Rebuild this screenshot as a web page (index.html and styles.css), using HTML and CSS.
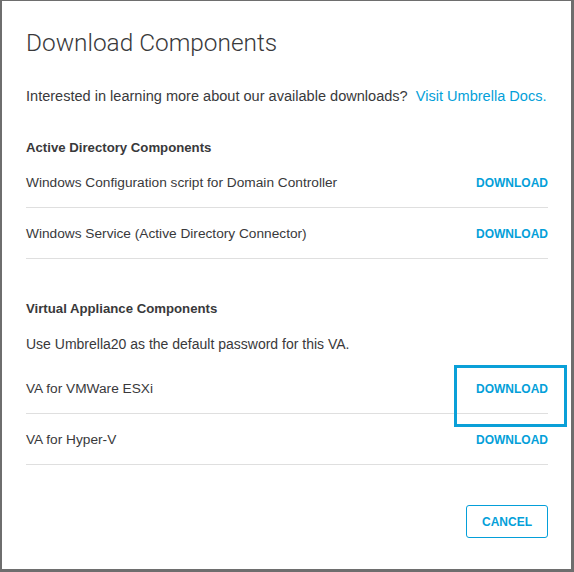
FILE: index.html
```html
<!DOCTYPE html>
<html>
<head>
<meta charset="utf-8">
<link rel="stylesheet" href="styles.css">
</head>
<body>
<div class="modal">
  <h1 class="title">Download Components</h1>
  <p class="intro">Interested in learning more about our available downloads?&nbsp; <a class="link" href="#">Visit Umbrella Docs.</a></p>

  <section class="section first">
    <h2 class="heading">Active Directory Components</h2>
    <div class="row"><span class="label">Windows Configuration script for Domain Controller</span><a class="dl" href="#">DOWNLOAD</a></div>
    <div class="row"><span class="label">Windows Service (Active Directory Connector)</span><a class="dl" href="#">DOWNLOAD</a></div>
  </section>

  <section class="section second">
    <h2 class="heading">Virtual Appliance Components</h2>
    <p class="note">Use Umbrella20 as the default password for this VA.</p>
    <div class="row"><span class="label">VA for VMWare ESXi</span><a class="dl" href="#">DOWNLOAD</a></div>
    <div class="row"><span class="label">VA for Hyper-V</span><a class="dl" href="#">DOWNLOAD</a></div>
  </section>

  <div class="footer"><button class="cancel">CANCEL</button></div>

  <div class="highlight"></div>
</div>
</body>
</html>
```

FILE: styles.css
```css
* { box-sizing: border-box; }
html, body { margin: 0; padding: 0; background: #fff; }
body { font-family: "Liberation Sans", Arial, sans-serif; color: #39393b; }

.modal {
  position: relative;
  width: 574px;
  height: 572px;
  border-style: solid;
  border-color: #6e6e6e;
  border-width: 1px 3px 3px 2px;
  padding: 0 23px 0 24px;
  background: #fff;
}

.title {
  margin: 0;
  padding-top: 27px;
  font-family: Roboto, "Liberation Sans", sans-serif;
  font-weight: 300;
  font-size: 24.4px;
  line-height: 30px;
  color: #39393b;
}

.intro {
  margin: 28px 0 0;
  font-size: 14.55px;
  line-height: 20px;
  white-space: nowrap;
}

.link { color: #049fd9; text-decoration: none; }

.section.first { margin-top: 33px; }
.section.second { margin-top: 41px; }

.heading {
  margin: 0;
  font-size: 13.2px;
  line-height: 17px;
  padding-bottom: 1px;
  font-weight: bold;
  color: #39393b;
}

.note {
  margin: 16px 0 9px;
  font-size: 14px;
  line-height: 20px;
}

.row {
  display: flex;
  justify-content: space-between;
  align-items: center;
  padding: 16px 0 14px;
  border-bottom: 1px solid #dfdfdf;
  font-size: 13.7px;
  line-height: 20px;
}

.dl {
  color: #049fd9;
  font-weight: bold;
  font-size: 12px;
  text-decoration: none;
}

.footer {
  display: flex;
  justify-content: flex-end;
  margin-top: 40px;
}

.cancel {
  width: 82px;
  height: 33px;
  background: #fff;
  border: 1px solid #049fd9;
  border-radius: 3px;
  color: #049fd9;
  font-family: "Liberation Sans", Arial, sans-serif;
  font-weight: bold;
  font-size: 12px;
  padding: 0;
}

.highlight {
  position: absolute;
  left: 452px;
  top: 364px;
  width: 113px;
  height: 62px;
  border: 3px solid #0aa0d8;
}
```
